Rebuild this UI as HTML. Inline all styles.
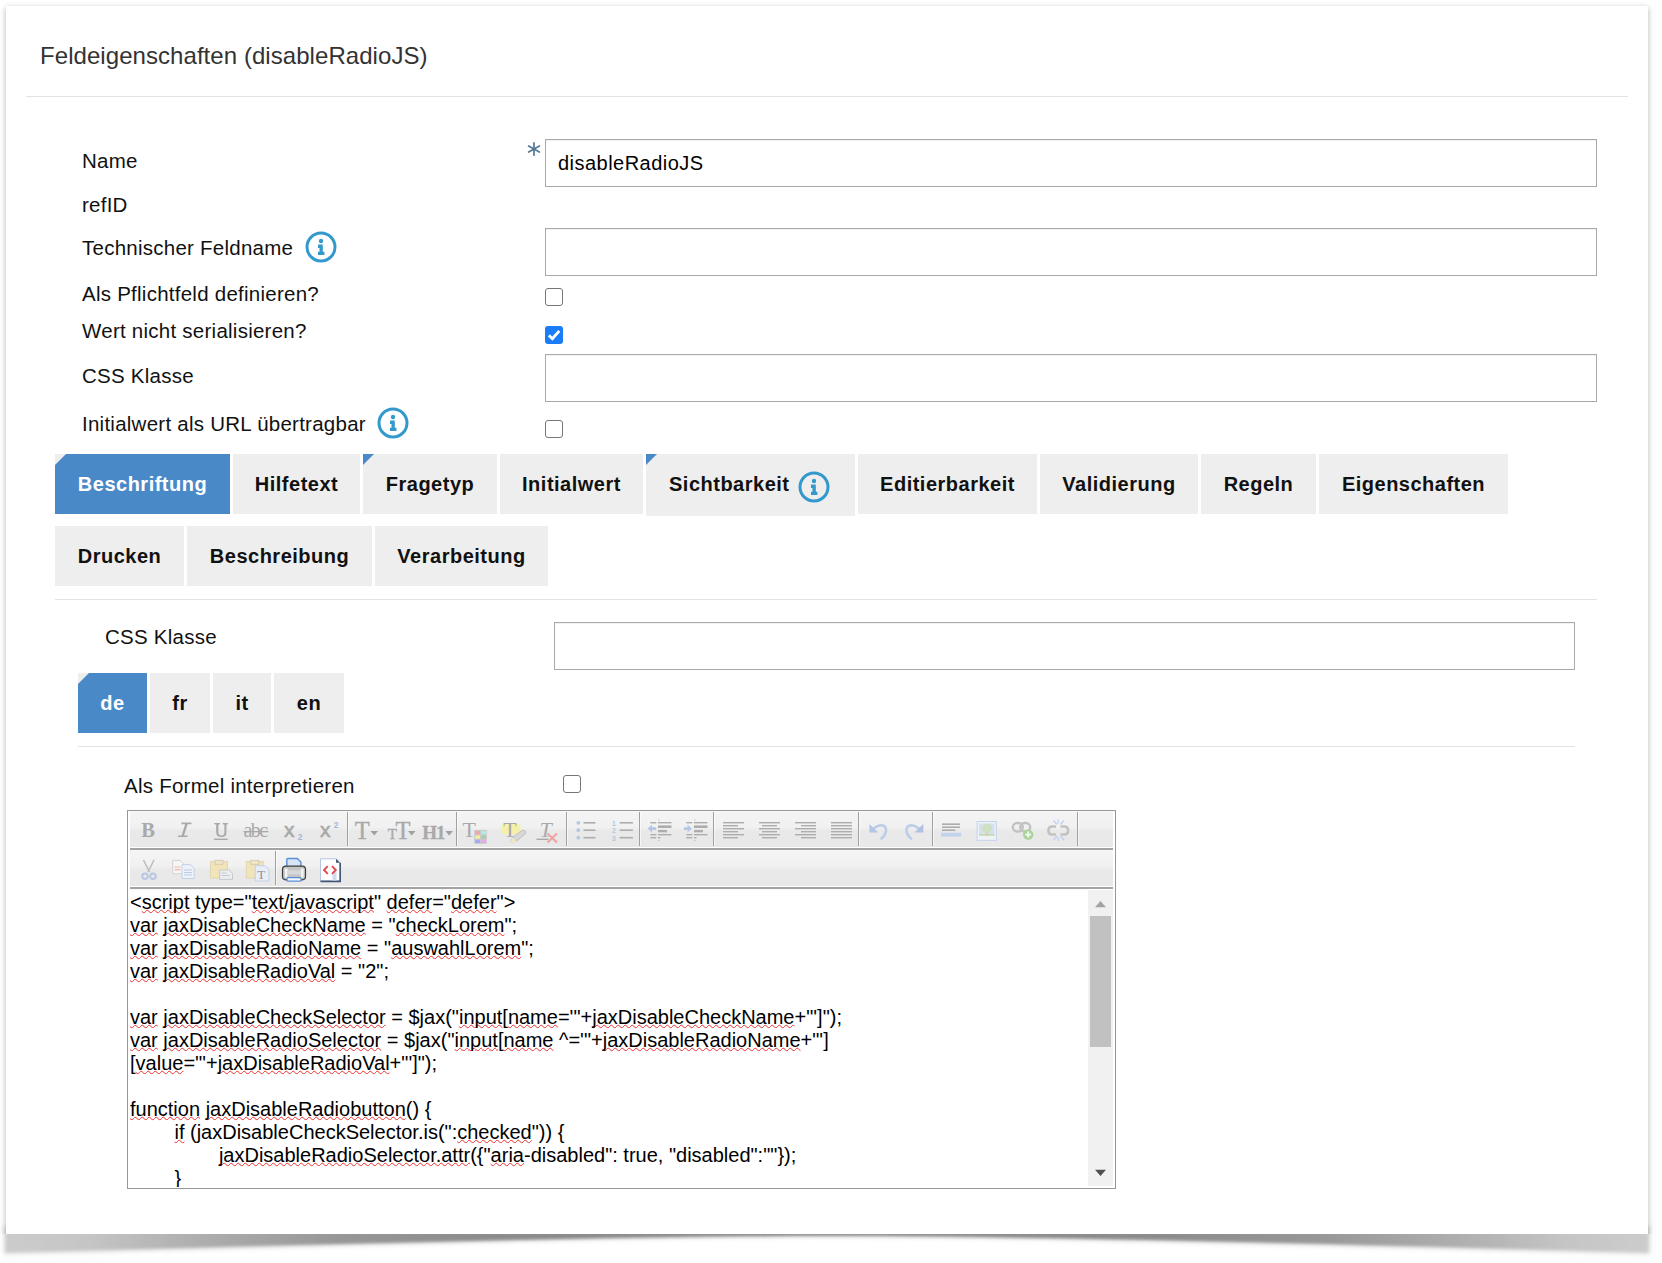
<!DOCTYPE html>
<html><head><meta charset="utf-8">
<style>
html,body{margin:0;padding:0;background:#fff;}
body{width:1662px;height:1263px;position:relative;overflow:hidden;font-family:"Liberation Sans",sans-serif;}
.card{position:absolute;left:6px;top:6px;width:1642px;height:1228px;background:#fff;box-shadow:0 2px 6px rgba(0,0,0,.3);clip-path:inset(-12px -12px 0 -12px);}
.a{position:absolute;white-space:pre;line-height:1;}
.lbl{font-size:20.5px;color:#111;letter-spacing:0.25px;margin-top:-0.4px;}
.inp{position:absolute;box-sizing:border-box;border:1px solid #a9a9a9;background:#fff;box-shadow:inset 0 1px 1px rgba(0,0,0,.06);}
.cb{position:absolute;box-sizing:border-box;width:18px;height:18px;border:1.7px solid #767676;border-radius:3px;background:#fff;}
.cbc{position:absolute;width:18px;height:18px;border-radius:3px;background:#1a7cf7;}
.hr{position:absolute;height:1px;background:#e3e3e3;}
.tab{position:absolute;height:60px;background:#eee;color:#111;font-weight:bold;font-size:20px;line-height:1;letter-spacing:0.5px;white-space:pre;}
.tab span{position:absolute;left:0;right:0;text-align:center;top:20px;}
.tab.act{background:#4a89c8;color:#fff;}
.corner{position:absolute;left:0;top:0;width:0;height:0;border-top:11px solid #4a89c8;border-right:11px solid transparent;}
.act .corner{border-top-color:#eee;}
.tb{position:absolute;left:130px;width:983px;height:35px;background:linear-gradient(#f4f4f4 0,#f1f1f1 15px,#e9e9e9 19px,#e8e8e8 35px);}
.sep{position:absolute;width:1px;height:34px;background:#a0a0a0;box-shadow:1px 0 0 rgba(255,255,255,.6);}
#code u{text-decoration:underline wavy #ee3030;text-decoration-thickness:1.35px;text-underline-offset:0px;text-decoration-skip-ink:none;}
</style></head><body>
<svg style="position:absolute;left:0;top:0" width="1662" height="1263" viewBox="0 0 1662 1263">
<defs>
<linearGradient id="cg" x1="6" y1="0" x2="1648" y2="0" gradientUnits="userSpaceOnUse">
<stop offset="0" stop-color="#cccccc"/><stop offset="0.05" stop-color="#c5c5c5"/><stop offset="0.12" stop-color="#adadad"/><stop offset="0.2" stop-color="#979797"/><stop offset="0.3" stop-color="#8b8b8b"/><stop offset="0.5" stop-color="#878787"/><stop offset="0.7" stop-color="#8b8b8b"/><stop offset="0.8" stop-color="#979797"/><stop offset="0.88" stop-color="#adadad"/><stop offset="0.95" stop-color="#c5c5c5"/><stop offset="1" stop-color="#cccccc"/>
</linearGradient>
<filter id="cb" x="-5%" y="-50%" width="110%" height="200%"><feGaussianBlur stdDeviation="1.5"/></filter><filter id="cb2" x="-5%" y="-50%" width="110%" height="200%"><feGaussianBlur stdDeviation="2.5"/></filter>
</defs>
<path d="M4 1226H1650V1254C1400 1248 1050 1237 831 1236.5C612 1237 262 1248 4 1254Z" fill="#d8d8d8" filter="url(#cb2)"/>
<path d="M6 1232H1648V1252C1400 1246 1050 1236 831 1235.8C612 1236 262 1246 6 1252Z" fill="url(#cg)" filter="url(#cb)"/>
</svg>
<div class="card"></div>

<!-- header -->
<div class="a" style="left:40px;top:44px;font-size:24px;color:#333;letter-spacing:0.06px;">Feldeigenschaften (disableRadioJS)</div>
<div class="hr" style="left:26px;top:96px;width:1602px;"></div>

<!-- labels -->
<div class="a lbl" style="left:82px;top:151px;">Name</div>
<div class="a lbl" style="left:82px;top:195px;">refID</div>
<div class="a lbl" style="left:82px;top:238px;">Technischer Feldname</div>
<div class="a lbl" style="left:82px;top:284px;">Als Pflichtfeld definieren?</div>
<div class="a lbl" style="left:82px;top:321px;">Wert nicht serialisieren?</div>
<div class="a lbl" style="left:82px;top:366px;">CSS Klasse</div>
<div class="a lbl" style="left:82px;top:414px;">Initialwert als URL übertragbar</div>

<!-- info icons -->
<svg style="position:absolute;left:305px;top:231px" width="32" height="32" viewBox="0 0 32 32"><circle cx="16" cy="16" r="14" fill="none" stroke="#3399cc" stroke-width="3"/><circle cx="16" cy="10" r="2.2" fill="#3399cc"/><path d="M13 13.5h4.8v7.2h1.6v3.4h-6.4v-3.4h1.5v-3.8h-1.5z" fill="#3399cc"/></svg>
<svg style="position:absolute;left:377px;top:407px" width="32" height="32" viewBox="0 0 32 32"><circle cx="16" cy="16" r="14" fill="none" stroke="#3399cc" stroke-width="3"/><circle cx="16" cy="10" r="2.2" fill="#3399cc"/><path d="M13 13.5h4.8v7.2h1.6v3.4h-6.4v-3.4h1.5v-3.8h-1.5z" fill="#3399cc"/></svg>

<!-- asterisk -->
<svg style="position:absolute;left:527px;top:141px" width="14" height="16" viewBox="0 0 14 16"><g stroke="#557a96" stroke-width="1.7" stroke-linecap="round"><path d="M7 1.8v12.4"/><path d="M1.6 4.9l10.8 6.2"/><path d="M12.4 4.9L1.6 11.1"/></g><circle cx="7" cy="8" r="1.6" fill="#557a96"/></svg>

<!-- inputs -->
<div class="inp" style="left:545px;top:139px;width:1052px;height:48px;"></div>
<div class="a" style="left:558px;top:153px;font-size:20px;color:#000;letter-spacing:0.47px;">disableRadioJS</div>
<div class="inp" style="left:545px;top:228px;width:1052px;height:48px;"></div>
<div class="cb" style="left:545px;top:288px;"></div>
<div class="cbc" style="left:545px;top:326px;"><svg width="18" height="18" viewBox="0 0 18 18" style="position:absolute;left:0;top:0"><path d="M3.9 9.4l3.5 3.3L14.3 4.9" fill="none" stroke="#fff" stroke-width="2.9"/></svg></div>
<div class="inp" style="left:545px;top:354px;width:1052px;height:48px;"></div>
<div class="cb" style="left:545px;top:420px;"></div>

<!-- tabs row 1 -->
<div class="tab act" style="left:55px;top:454px;width:175px;"><div class="corner"></div><span>Beschriftung</span></div>
<div class="tab" style="left:233px;top:454px;width:127px;"><span>Hilfetext</span></div>
<div class="tab" style="left:363px;top:454px;width:134px;"><div class="corner"></div><span>Fragetyp</span></div>
<div class="tab" style="left:500px;top:454px;width:143px;"><span>Initialwert</span></div>
<div class="tab" style="left:646px;top:454px;width:209px;height:62px;"><div class="corner"></div><span style="text-align:left;left:23px;">Sichtbarkeit</span>
<svg style="position:absolute;left:152px;top:17px" width="32" height="32" viewBox="0 0 32 32"><circle cx="16" cy="16" r="14" fill="none" stroke="#3399cc" stroke-width="3"/><circle cx="16" cy="10" r="2.2" fill="#3399cc"/><path d="M13 13.5h4.8v7.2h1.6v3.4h-6.4v-3.4h1.5v-3.8h-1.5z" fill="#3399cc"/></svg></div>
<div class="tab" style="left:858px;top:454px;width:179px;"><span>Editierbarkeit</span></div>
<div class="tab" style="left:1040px;top:454px;width:158px;"><span>Validierung</span></div>
<div class="tab" style="left:1201px;top:454px;width:115px;"><span>Regeln</span></div>
<div class="tab" style="left:1319px;top:454px;width:189px;"><span>Eigenschaften</span></div>
<!-- tabs row 2 -->
<div class="tab" style="left:55px;top:526px;width:129px;"><span>Drucken</span></div>
<div class="tab" style="left:187px;top:526px;width:185px;"><span>Beschreibung</span></div>
<div class="tab" style="left:375px;top:526px;width:173px;"><span>Verarbeitung</span></div>
<div class="hr" style="left:55px;top:599px;width:1542px;"></div>

<!-- second section -->
<div class="a lbl" style="left:105px;top:627px;">CSS Klasse</div>
<div class="inp" style="left:554px;top:622px;width:1021px;height:48px;"></div>

<div class="tab act" style="left:78px;top:673px;width:69px;"><div class="corner"></div><span style="top:20px">de</span></div>
<div class="tab" style="left:150px;top:673px;width:60px;"><span style="top:20px">fr</span></div>
<div class="tab" style="left:213px;top:673px;width:58px;"><span style="top:20px">it</span></div>
<div class="tab" style="left:274px;top:673px;width:70px;"><span style="top:20px">en</span></div>
<div class="hr" style="left:78px;top:746px;width:1497px;"></div>

<div class="a lbl" style="left:124px;top:776px;">Als Formel interpretieren</div>
<div class="cb" style="left:563px;top:775px;"></div>

<!-- EDITOR -->
<div style="position:absolute;left:127px;top:810px;width:987px;height:377px;border:1px solid #979797;background:#fff;"></div>
<!-- toolbar rows -->
<div class="tb" style="top:812px;"></div>
<div style="position:absolute;left:130px;top:811px;width:983px;height:1px;background:#f8f8f8;"></div>
<div style="position:absolute;left:130px;top:848px;width:983px;height:2px;background:#a3a3a3;"></div>
<div style="position:absolute;left:130px;top:850px;width:983px;height:1px;background:#f7f7f7;"></div>
<div class="tb" style="top:851px;"></div>
<div style="position:absolute;left:130px;top:887px;width:983px;height:2px;background:#a3a3a3;"></div>
<div style="position:absolute;left:130px;top:889px;width:958px;height:1px;background:#f9f9f9;"></div>
<!-- separators -->
<div class="sep" style="left:347px;top:812px;"></div>
<div class="sep" style="left:456px;top:812px;"></div>
<div class="sep" style="left:565.5px;top:812px;width:1.6px;"></div>
<div class="sep" style="left:639px;top:812px;"></div>
<div class="sep" style="left:712.5px;top:812px;width:1.6px;"></div>
<div class="sep" style="left:858px;top:812px;"></div>
<div class="sep" style="left:932px;top:812px;"></div>
<div class="sep" style="left:1077px;top:812px;"></div>
<div class="sep" style="left:274.5px;top:851px;width:1.6px;"></div>
<svg style="position:absolute;left:0;top:0;pointer-events:none" width="1662" height="1263" viewBox="0 0 1662 1263">
<g font-family="Liberation Serif" fill="#a9a9a9">
<!-- B -->
<text x="141.3" y="837" font-size="20.5" font-weight="bold">B</text>
<!-- I -->
<path d="M181.5 822.6h10v1.6h-10zM178 835.4h9.5v1.6h-9.5zM185.2 824.2h2.4l-3.6 11.2h-2.4z"/>
<!-- U -->
<path d="M214 823h6v1.6h-1.6v7.6q0 3.2 3 3.2t3-3.2v-7.6h-1.6v-1.6h5v1.6h-1.4v7.8q0 4.6-5 4.6t-5.2-4.6v-7.8h-1.2z"/>
<rect x="214" y="838.6" width="13.6" height="1.4"/>
<!-- abc strike -->
<text x="243.6" y="837" font-size="20" letter-spacing="-1.6">abc</text>
<rect x="243.5" y="831" width="25" height="1.3"/>
</g>
<g font-family="Liberation Sans" fill="#a9a9a9">
<text x="284" y="837" font-size="21" stroke="#a9a9a9" stroke-width="0.6">x</text>
<text x="320" y="837" font-size="21" stroke="#a9a9a9" stroke-width="0.6">x</text>
</g>
<g font-family="Liberation Sans" fill="#a3b6d9" font-weight="bold">
<text x="297.8" y="840.4" font-size="8.5">2</text>
<text x="333.8" y="828.4" font-size="8.5">2</text>
</g>
<!-- group 2: T, TT, H1 -->
<g font-family="Liberation Serif" fill="#a9a9a9" stroke="#a9a9a9" stroke-width="0.35">
<text x="354.8" y="838.5" font-size="24.5">T</text>
<text x="387.8" y="838.5" font-size="15">T</text>
<text x="395.5" y="838.5" font-size="24.5">T</text>
<text x="422.3" y="838.5" font-size="19" font-weight="bold" letter-spacing="-1.2">H1</text>
</g>
<g fill="#a0a0a0">
<path d="M370.5 831h7.5l-3.75 4.5z"/>
<path d="M408 831h7.5l-3.75 4.5z"/>
<path d="M445.4 831h7.6l-3.8 4.5z"/>
</g>
<!-- group 3 -->
<g font-family="Liberation Serif" fill="#a9a9a9">
<text x="462.6" y="837" font-size="22">T</text>
</g>
<rect x="474.2" y="829.9" width="12.6" height="13.9" fill="#c9c9c9"/>
<rect x="475.3" y="831" width="4.8" height="3.4" fill="#f0a7a7"/>
<rect x="481.2" y="831" width="4.8" height="3.4" fill="#a8eef0"/>
<rect x="475.3" y="835.4" width="4.8" height="3.4" fill="#f1ef9c"/>
<rect x="481.2" y="835.4" width="4.8" height="3.4" fill="#a8cfa8"/>
<rect x="475.3" y="839.7" width="4.8" height="3.3" fill="#a5a8f4"/>
<rect x="481.2" y="839.7" width="4.8" height="3.3" fill="#e8a8f0"/>
<path d="M502 826q0-2 2-2h14q2.5 0 2.5 2.5v4.5q0 3-3 3h-13q-2.5 0-2.5-2.5z" fill="#f4f0a8"/>
<text x="503.2" y="837" font-size="22" font-family="Liberation Serif" fill="#a9a9a9">T</text>
<path d="M510 842l3-5 9-6.5q2-1 3.2 0.6t-0.4 3.2l-8.8 7.2z" fill="#d7d7d7" stroke="#b9b9b9" stroke-width="0.8"/>
<path d="M509.6 842.4l3.4-5.2 3.6 5.2z" fill="#efe9c3"/>
<text x="539.5" y="837" font-size="22" font-family="Liberation Serif" font-style="italic" fill="#a9a9a9">T</text>
<rect x="536.5" y="838.6" width="12" height="1.4" fill="#a9a9a9"/>
<path d="M547.5 833.5l9.5 9M557 833.5l-9.5 9" stroke="#f0a3a3" stroke-width="2.2"/>
<!-- group 4: lists -->
<g fill="#b7c6e2">
<circle cx="578.3" cy="822.8" r="1.9"/><circle cx="578.3" cy="830.2" r="1.9"/><circle cx="578.3" cy="837.7" r="1.9"/>
</g>
<g fill="#adadad">
<rect x="583.5" y="822" width="12" height="1.6"/><rect x="583.5" y="829.4" width="12" height="1.6"/><rect x="583.5" y="836.9" width="12" height="1.6"/>
<rect x="619.6" y="822" width="13.3" height="1.6"/><rect x="619.6" y="829.4" width="13.3" height="1.6"/><rect x="619.6" y="836.9" width="13.3" height="1.6"/>
</g>
<g font-family="Liberation Sans" font-size="7.5" font-weight="bold" fill="#b7c6e2">
<text x="611.8" y="825.6">1</text><text x="611.8" y="833">2</text><text x="611.8" y="840.6">3</text>
</g>
<!-- outdent / indent -->
<g id="ind" fill="#adadad">
<rect x="650.3" y="822" width="6" height="1.4"/><rect x="658" y="822" width="13.5" height="1.4"/>
<rect x="658" y="825.4" width="13.5" height="2.6"/><rect x="658" y="829.9" width="9" height="2.4"/>
<rect x="650.3" y="834" width="6" height="1.4"/><rect x="658" y="834" width="13.5" height="1.4"/>
<rect x="650.3" y="837" width="6" height="1.4"/><rect x="658" y="837" width="2.5" height="1.4"/>
<rect x="658.4" y="819.5" width="1" height="1"/><rect x="658.4" y="840" width="1" height="1"/>
</g>
<path d="M647.6 828.6l4.4-3.8v2.4h4.2v2.8h-4.2v2.4z" fill="#b7c6e2"/>
<use href="#ind" x="36"/>
<path d="M692 828.6l-4.4-3.8v2.4h-3.6v2.8h3.6v2.4z" fill="#b7c6e2"/>
<!-- alignment -->
<g fill="#adadad">
<rect x="723" y="822" width="21" height="1.4"/><rect x="723" y="825" width="15" height="1.4"/><rect x="723" y="828" width="21" height="1.4"/><rect x="723" y="831" width="15" height="1.4"/><rect x="723" y="834" width="21" height="1.4"/><rect x="723" y="837" width="15" height="1.4"/>
<rect x="759" y="822" width="21" height="1.4"/><rect x="762" y="825" width="15" height="1.4"/><rect x="759" y="828" width="21" height="1.4"/><rect x="762" y="831" width="15" height="1.4"/><rect x="759" y="834" width="21" height="1.4"/><rect x="762" y="837" width="15" height="1.4"/>
<rect x="795" y="822" width="21" height="1.4"/><rect x="801" y="825" width="15" height="1.4"/><rect x="795" y="828" width="21" height="1.4"/><rect x="801" y="831" width="15" height="1.4"/><rect x="795" y="834" width="21" height="1.4"/><rect x="801" y="837" width="15" height="1.4"/>
<rect x="831" y="822" width="21" height="1.4"/><rect x="831" y="825" width="21" height="1.4"/><rect x="831" y="828" width="21" height="1.4"/><rect x="831" y="831" width="21" height="1.4"/><rect x="831" y="834" width="21" height="1.4"/><rect x="831" y="837" width="21" height="1.4"/>
</g>
<!-- undo / redo -->
<g fill="none" stroke="#bccde8" stroke-width="2.6">
<path d="M871 831.5q5-6 10-6.2q5 0 5 5q0 5-5.5 9"/>
<path d="M921.5 831.5q-5-6-10-6.2q-5 0-5 5q0 5 5.5 9"/>
</g>
<path d="M869.4 824v8.6h8.8z" fill="#b4c6e4"/>
<path d="M923.3 824v8.6h-8.8z" fill="#b0c2e0"/>
<!-- hr -->
<g fill="#adadad"><rect x="942" y="823.4" width="18" height="1.6"/><rect x="942" y="826.4" width="18" height="1.6"/><rect x="942" y="829.4" width="13.4" height="1.6"/></g>
<rect x="941" y="832.8" width="20.3" height="3.8" fill="#c3d3ee"/>
<!-- image -->
<rect x="977.1" y="821.5" width="19.3" height="18.9" fill="#eef1f6" stroke="#c6d4ea" stroke-width="1"/>
<rect x="979" y="823.5" width="15.5" height="11.5" fill="#d6e1ee"/>
<circle cx="987" cy="828.5" r="5" fill="#cfe0c2"/>
<rect x="979" y="834.2" width="15.5" height="1.4" fill="#b9d9a6"/>
<rect x="986" y="833" width="2" height="3" fill="#e9caa0"/>
<!-- link -->
<g fill="none" stroke="#c2c2c2" stroke-width="2.4">
<rect x="1012.8" y="823" width="10" height="8.5" rx="4.2"/>
<rect x="1020.2" y="823" width="10" height="8.5" rx="4.2"/>
</g>
<circle cx="1028.2" cy="834.6" r="5.2" fill="#a9d39b"/>
<path d="M1028.2 831.6v6M1025.2 834.6h6" stroke="#f4fbf1" stroke-width="1.8"/>
<!-- unlink -->
<g fill="none" stroke="#c2c2c2" stroke-width="2.6">
<path d="M1056 826.5h-3.8q-3.8 0-3.8 4t3.8 4h3.8"/>
<path d="M1060.5 826.5h3.8q3.8 0 3.8 4t-3.8 4h-3.8"/>
</g>
<g stroke="#bcd0ee" stroke-width="1.2"><path d="M1053.5 820.5l3.5 4M1064 820.5l-3.5 4M1053.5 840l3.5-4M1064 840l-3.5-4M1058.2 819.5v4M1058.2 837v4"/></g>
<!-- ROW 2 -->
<!-- scissors -->
<g stroke="#bdbdbd" stroke-width="1.6"><path d="M143.5 860l6 12M154 860l-6 12"/></g>
<g fill="none" stroke="#b8c8e4" stroke-width="2"><circle cx="145" cy="876.2" r="2.8"/><circle cx="153" cy="876.2" r="2.8"/></g>
<!-- copy -->
<path d="M172.7 860.4h7.5l3 3v10.4h-10.5z" fill="#f6f6f6" stroke="#d2d2d2" stroke-width="1"/>
<rect x="174.5" y="866.5" width="6" height="1" fill="#f2b3a8"/><rect x="174.5" y="869.3" width="6" height="1" fill="#f2a3a3"/>
<path d="M182 864.6h8.5l3.6 3.6v10.3h-12.1z" fill="#eef2f9" stroke="#c3d0e8" stroke-width="1"/>
<g fill="#b7c6e2"><rect x="184" y="869.5" width="8" height="0.9"/><rect x="184" y="872" width="8" height="0.9"/><rect x="184" y="874.5" width="8" height="0.9"/></g>
<!-- paste -->
<rect x="210.5" y="861.6" width="17" height="16.5" fill="#f1e4b8" stroke="#e2d6b0" stroke-width="1"/>
<rect x="215" y="860.3" width="8" height="4" fill="#efe6c8" stroke="#cfc7aa" stroke-width="0.8"/>
<path d="M219.6 870h9.5l3.4 3.4v6h-12.9z" fill="#e9ecf1" stroke="#c9c9c9" stroke-width="1"/>
<g fill="#c5c5c5"><rect x="221.5" y="872.6" width="5" height="0.9"/><rect x="221.5" y="875" width="8" height="0.9"/></g>
<!-- paste text -->
<rect x="246.3" y="861.6" width="17" height="16.5" fill="#f1e4b8" stroke="#e2d6b0" stroke-width="1"/>
<rect x="250.8" y="860.3" width="8" height="4" fill="#efe6c8" stroke="#cfc7aa" stroke-width="0.8"/>
<path d="M255.2 865.8h10l3.8 3.8v11.4h-13.8z" fill="#e8eef8" stroke="#c3d0e8" stroke-width="1"/>
<text x="257.2" y="878.6" font-family="Liberation Serif" font-size="13" fill="#8f8f8f">T</text>
<!-- print -->
<path d="M286.8 869v-9.5q0-1 1-1h9.5l3.6 3.6v6.9z" fill="#d6e4f7" stroke="#5b8ed8" stroke-width="1.4"/>
<rect x="282.5" y="866.2" width="23" height="13.6" rx="3.2" fill="#c4c4c4" stroke="#3d3d3d" stroke-width="1.2"/>
<rect x="284.8" y="868.6" width="2.8" height="9" fill="#fff" opacity="0.8"/>
<rect x="300.8" y="868.6" width="2.8" height="9" fill="#fff" opacity="0.8"/>
<rect x="287.2" y="870.4" width="13.5" height="4" fill="#d9d9d9"/>
<rect x="287" y="877.6" width="14" height="3.6" rx="1" fill="#f5f8fd" stroke="#5b8ed8" stroke-width="1.2"/>
<!-- source -->
<path d="M320.5 858.8h15.6l4 4v18.4h-19.6z" fill="#fff" stroke="#b6c6e0" stroke-width="1"/>
<path d="M340.2 862.8v18.6h-19.7" fill="none" stroke="#3f5674" stroke-width="1.6"/>
<path d="M336 858.8v4h4z" fill="#3f5674"/>
<rect x="332.5" y="872" width="4" height="8.5" fill="#cfdcef"/>
<path d="M327.8 866.2l-3.8 3.8 3.8 3.8M332 866.2l3.8 3.8-3.8 3.8" fill="none" stroke="#e04b4b" stroke-width="1.9"/>
</svg>

<!-- content -->
<div id="code" style="position:absolute;left:130px;top:890px;width:956px;height:297px;overflow:hidden;">
<div style="position:absolute;left:0;top:0.5px;font-size:20px;line-height:23px;color:#000;white-space:pre;tab-size:8;">&lt;<u>script</u> type="<u>text</u>/<u>javascript</u>" <u>defer</u>="<u>defer</u>"&gt;
<u>var</u> <u>jaxDisableCheckName</u> = "<u>checkLorem</u>";
<u>var</u> <u>jaxDisableRadioName</u> = "<u>auswahlLorem</u>";
<u>var</u> <u>jaxDisableRadioVal</u> = "2";

<u>var</u> <u>jaxDisableCheckSelector</u> = $jax("<u>input</u>[<u>name</u>='"+<u>jaxDisableCheckName</u>+"']");
<u>var</u> <u>jaxDisableRadioSelector</u> = $jax("<u>input</u>[<u>name</u> ^='"+<u>jaxDisableRadioName</u>+"']
[<u>value</u>='"+<u>jaxDisableRadioVal</u>+"']");

<u>function</u> <u>jaxDisableRadiobutton</u>() {
	<u>if</u> (jaxDisableCheckSelector.is(":<u>checked</u>")) {
		<u>jaxDisableRadioSelector.attr</u>({"<u>aria</u>-disabled": true, "disabled":""});
	}</div>
</div>
<!-- scrollbar -->
<div style="position:absolute;left:1088px;top:890px;width:25px;height:296px;background:#f1f1f1;"></div>
<div style="position:absolute;left:1090px;top:916px;width:21px;height:131px;background:#c1c1c1;"></div>
<svg style="position:absolute;left:1094px;top:900px" width="13" height="8" viewBox="0 0 13 8"><path d="M1 7.2L6.5 1 12 7.2z" fill="#a3a3a3"/></svg>
<svg style="position:absolute;left:1094px;top:1169px" width="13" height="8" viewBox="0 0 13 8"><path d="M1 0.8L6.5 7 12 0.8z" fill="#505050"/></svg>


<!-- bottom curl shadow -->
</body></html>
